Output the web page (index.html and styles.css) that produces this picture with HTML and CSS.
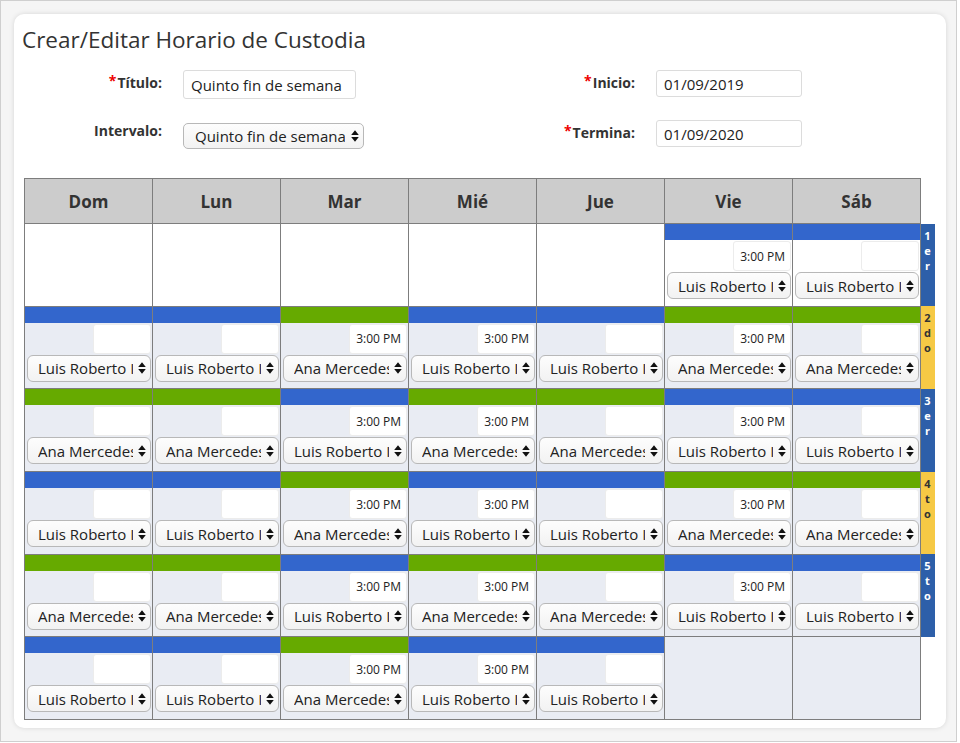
FILE: index.html
```html
<!DOCTYPE html>
<html lang="es">
<head>
    <meta charset="UTF-8">
    <meta name="viewport" content="width=device-width, initial-scale=1.0">
    <title>Crear/Editar Horario de Custodia</title>
    <link rel="stylesheet" href="styles.css">
</head>
<body>
    <div class="frame">
        <div class="card">
            <h1 class="title">Crear/Editar Horario de Custodia</h1>

            <div class="form-grid">
                <label class="field-label"><span class="req">*</span>Título:</label>
                <input type="text" class="text-input title-input" value="Quinto fin de semana">
                <label class="field-label"><span class="req">*</span>Inicio:</label>
                <input type="text" class="text-input date-input" value="01/09/2019">

                <label class="field-label">Intervalo:</label>
                <div class="select-wrap interval-select">
                    <select>
                        <option>Quinto fin de semana</option>
                        <option>Fines de semana alternos</option>
                    </select>
                    <svg class="arrows" viewBox="0 0 8 12"><path d="M4 0.3L7.8 5H0.2Z M0.2 7H7.8L4 11.7Z"/></svg>
                </div>
                <label class="field-label"><span class="req">*</span>Termina:</label>
                <input type="text" class="text-input date-input" value="01/09/2020">
            </div>

            <table class="schedule">
                <colgroup>
                    <col class="day-col"><col class="day-col"><col class="day-col"><col class="day-col">
                    <col class="day-col"><col class="day-col"><col class="day-col"><col class="week-col">
                </colgroup>
                <thead>
                    <tr>
                        <th>Dom</th><th>Lun</th><th>Mar</th><th>Mié</th><th>Jue</th><th>Vie</th><th>Sáb</th>
                        <th class="week-head"></th>
                    </tr>
                </thead>
                <tbody id="weeks"></tbody>
            </table>
        </div>
    </div>

    <script>
        document.addEventListener('DOMContentLoaded', function() {
            const people = {
                L: 'Luis Roberto I Ramírez',
                A: 'Ana Mercedes Pérez'
            };

            // [bar colour, has time, parent]
            const weekA = [['b', 0, 'L'], ['b', 0, 'L'], ['g', 1, 'A'], ['b', 1, 'L'], ['b', 0, 'L'], ['g', 1, 'A'], ['g', 0, 'A']];
            const weekB = [['g', 0, 'A'], ['g', 0, 'A'], ['b', 1, 'L'], ['g', 1, 'A'], ['g', 0, 'A'], ['b', 1, 'L'], ['b', 0, 'L']];

            const weeks = [
                { days: [null, null, null, null, null, ['b', 1, 'L'], ['b', 0, 'L']], label: '1er', tone: 'blue', first: true },
                { days: weekA, label: '2do', tone: 'yellow' },
                { days: weekB, label: '3er', tone: 'blue' },
                { days: weekA, label: '4to', tone: 'yellow' },
                { days: weekB, label: '5to', tone: 'blue' },
                { days: [['b', 0, 'L'], ['b', 0, 'L'], ['g', 1, 'A'], ['b', 1, 'L'], ['b', 0, 'L'], null, null], label: null }
            ];

            const arrows = '<svg class="arrows" viewBox="0 0 8 12"><path d="M4 0.3L7.8 5H0.2Z M0.2 7H7.8L4 11.7Z"/></svg>';

            function dayCell(day, first) {
                const td = document.createElement('td');
                td.className = 'day' + (first ? ' first-week' : '');
                if (!day) {
                    return td;
                }
                const [colour, hasTime, who] = day;
                const options = Object.keys(people).map(key =>
                    `<option${key === who ? ' selected' : ''}>${people[key]}</option>`).join('');
                td.innerHTML =
                    `<div class="bar ${colour === 'b' ? 'bar-blue' : 'bar-green'}"></div>` +
                    `<div class="cell-body">` +
                        `<input type="text" class="time-input" value="${hasTime ? '3:00 PM' : ''}">` +
                        `<div class="select-wrap person-select"><select>${options}</select>${arrows}</div>` +
                    `</div>`;
                return td;
            }

            const body = document.getElementById('weeks');
            weeks.forEach(week => {
                const tr = document.createElement('tr');
                week.days.forEach(day => tr.appendChild(dayCell(day, week.first)));

                const label = document.createElement('td');
                label.className = 'week-label' + (week.label ? ' week-' + week.tone : '');
                if (week.label) {
                    week.label.split('').forEach(ch => {
                        const span = document.createElement('span');
                        span.textContent = ch;
                        label.appendChild(span);
                    });
                }
                tr.appendChild(label);
                body.appendChild(tr);
            });
        });
    </script>
</body>
</html>
```

FILE: styles.css
```css
html, body {
    margin: 0;
    background-color: #fff;
}
body {
    font-family: 'Open Sans', 'Noto Sans', sans-serif;
    color: #333;
}
.frame {
    box-sizing: border-box;
    width: 957px;
    height: 742px;
    border: 1px solid #cfcfcf;
    background-color: #f5f5f5;
    padding: 13px 0 0 13px;
}
.card {
    box-sizing: border-box;
    width: 932px;
    height: 714px;
    background-color: #fff;
    border-radius: 10px;
    box-shadow: 0 0 5px rgba(0, 0, 0, 0.13);
    padding: 11px 8px 9px;
}
.title {
    margin: 0;
    font-size: 22.5px;
    line-height: 30px;
    font-weight: 400;
    color: #333;
}

/* form */
.form-grid {
    display: grid;
    grid-template-columns: 140px 290px 141px 146px;
    column-gap: 21px;
    row-gap: 21px;
    align-items: start;
    margin-top: 15px;
}
.field-label {
    text-align: right;
    font-size: 14px;
    font-weight: 700;
    line-height: 20px;
    padding-top: 1px;
    color: #333;
}
.req {
    color: #e00;
    font-size: 14px;
    vertical-align: 2px;
    margin-right: 1px;
}
.text-input {
    box-sizing: border-box;
    border: 1px solid #dcdcdc;
    border-radius: 3px;
    font-family: inherit;
    font-size: 15px;
    color: #222;
    padding: 0 7px;
    outline: none;
}
.title-input {
    width: 173px;
    height: 29px;
}
.date-input {
    width: 146px;
    height: 27px;
}

/* select boxes */
.select-wrap {
    position: relative;
}
.select-wrap select {
    -webkit-appearance: none;
    appearance: none;
    box-sizing: border-box;
    width: 100%;
    border: 1px solid #b8b8b8;
    background: linear-gradient(#fdfdfd, #f2f2f2);
    font-family: inherit;
    font-size: 15px;
    color: #222;
    outline: none;
    margin: 0;
}
.select-wrap .arrows {
    position: absolute;
    top: 50%;
    right: 5px;
    width: 8px;
    height: 12px;
    transform: translateY(-50%);
    pointer-events: none;
    fill: #111;
}
.interval-select {
    width: 181px;
    margin-top: 3px;
}
.interval-select select {
    height: 26px;
    border-radius: 5px;
    padding: 0 18px 0 11px;
}

/* schedule table */
.schedule {
    border-collapse: collapse;
    table-layout: fixed;
    margin: 29px 0 0 2px;
}
.day-col {
    width: 128px;
}
.week-col {
    width: 14px;
}
.schedule th {
    height: 44px;
    padding: 0;
    background-color: #cccccc;
    border: 1px solid #7d7d7d;
    font-size: 17px;
    font-weight: 700;
    color: #333;
}
.schedule th.week-head {
    background: none;
    border: none;
}
.day {
    height: 81.7px;
    padding: 0;
    vertical-align: top;
    border: 1px solid #7d7d7d;
    background-color: #e9ecf3;
}
.day.first-week {
    background-color: #fff;
}
.bar {
    height: 16px;
}
.bar-blue {
    background-color: #3366cc;
}
.bar-green {
    background-color: #66aa00;
}
.cell-body {
    display: flex;
    flex-direction: column;
    align-items: flex-end;
    gap: 1px;
    padding: 1px 1px 0 2px;
}
.time-input {
    box-sizing: border-box;
    width: 58px;
    height: 30px;
    border: 1px solid #ececec;
    border-radius: 3px;
    background-color: #fff;
    font-family: inherit;
    font-size: 12px;
    color: #222;
    text-align: right;
    padding: 0 5px 0 0;
    outline: none;
}
.person-select {
    width: 100%;
}
.person-select select {
    height: 27px;
    border-radius: 6px;
    padding: 0 17px 0 10px;
}
.week-label {
    padding: 4px 0 0;
    vertical-align: top;
    text-align: center;
    font-size: 11px;
    font-weight: 700;
    line-height: 15px;
}
.week-label span {
    display: block;
    height: 15px;
}
.week-blue {
    background-color: #2d5fa9;
    color: #fff;
}
.week-yellow {
    background-color: #f6c945;
    color: #333;
}
```
